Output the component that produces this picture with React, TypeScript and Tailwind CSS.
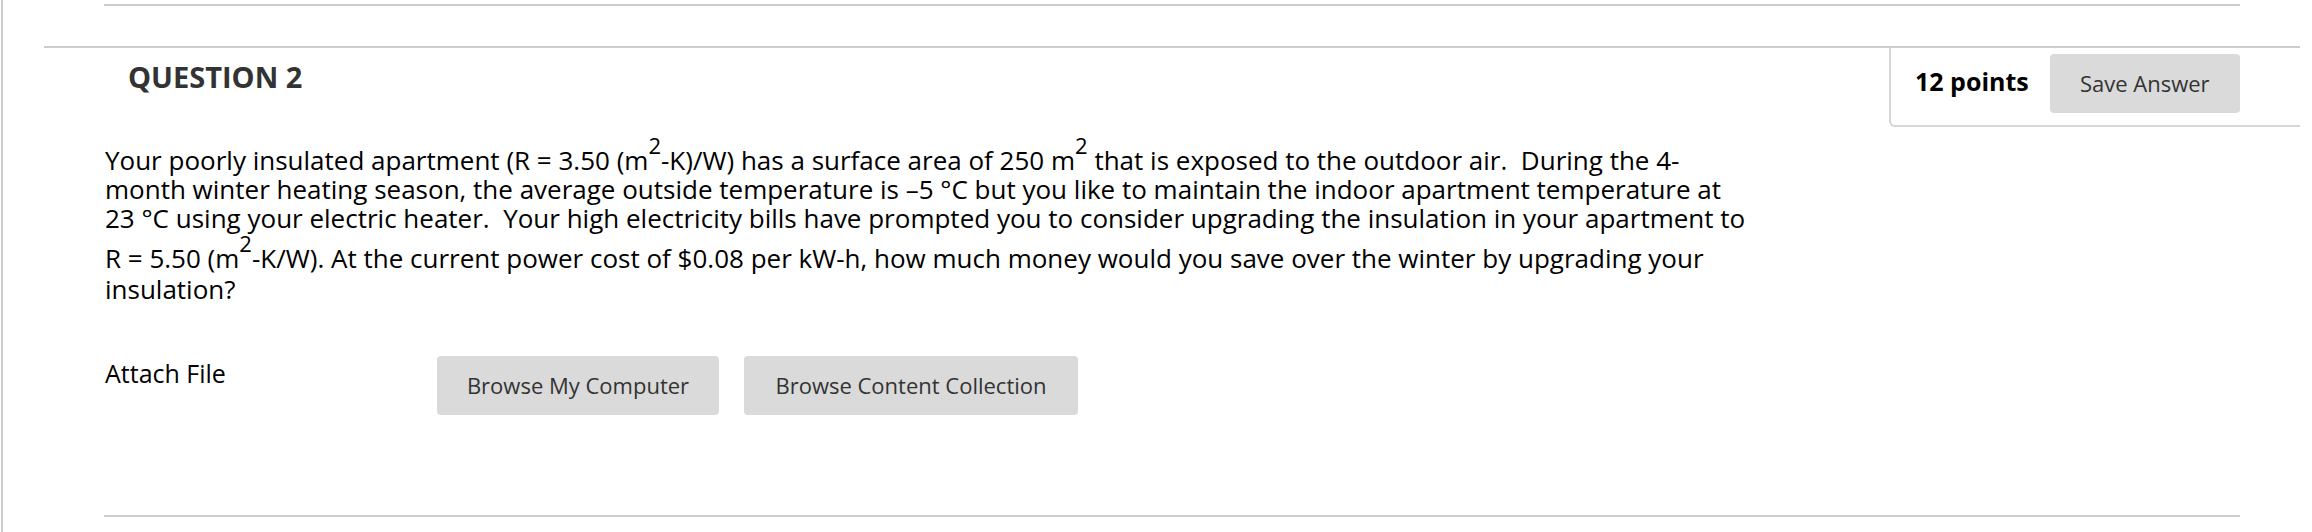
import React from 'react';

const Sup = ({ children }: { children: React.ReactNode }) => (
  <span className="inline-block text-[22px] leading-[21px] align-[16px]">{children}</span>
);

const GreyButton = ({ label, width }: { label: string; width: string }) => (
  <button
    className={`${width} h-[59px] shrink-0 rounded-[4px] bg-[#dadada] text-[22px] text-[#333333] flex items-center justify-center`}
  >
    {label}
  </button>
);

export default function App() {
  return (
    <div
      className="w-[2312px] h-[532px] bg-white overflow-hidden"
      style={{ fontFamily: '"Open Sans", "Liberation Sans", sans-serif' }}
    >
      <div className="ml-[1px] h-full border-l-2 border-[#cdcdcd] pt-[4px]">
        {/* previous question divider */}
        <div className="ml-[101px] w-[2136px] h-[2px] bg-[#cdcdcd]" />

        {/* Question card */}
        <div className="mt-[40px] ml-[41px] w-[2256px] border-t-2 border-[#cdcdcd]">
          <div className="flex justify-between items-start">
            <h3 className="ml-[84px] mt-[14px] text-[29px] leading-[29px] font-bold text-[#333333]">
              QUESTION 2
            </h3>
            <div className="w-[411px] h-[79px] border-l-2 border-b-2 border-[#d6d6d6] rounded-bl-[6px] pl-[24px] pt-[6px] flex items-start gap-[21px]">
              <span className="mt-[15px] text-[25px] leading-[25px] font-bold text-black">12 points</span>
              <GreyButton label="Save Answer" width="w-[190px]" />
            </div>
          </div>

          <div className="pl-[61px]">
            <p className="mt-[8px] text-[26px] leading-[29px] text-black">
              Your poorly insulated apartment (R = 3.50 (m<Sup>2</Sup>-K)/W) has a surface area of 250 m<Sup>2</Sup> that
              is exposed to the outdoor air.{'\u00a0'} During the 4-
              <br />
              month winter heating season, the average outside temperature is –5 °C but you like to maintain the
              indoor apartment temperature at
              <br />
              23 °C using your electric heater.{'\u00a0'} Your high electricity bills have prompted you to consider
              upgrading the insulation in your apartment to
              <br />
              R = 5.50 (m<Sup>2</Sup>-K/W). At the current power cost of $0.08 per kW-h, how much money would you save
              over the winter by upgrading your
              <br />
              <span className="inline-block pt-[2px]">insulation?</span>
            </p>

            <div className="mt-[52px] flex items-start">
              <span className="w-[332px] mt-[5px] text-[25px] leading-[25px] text-black">Attach File</span>
              <div className="flex gap-[25px]">
                <GreyButton label="Browse My Computer" width="w-[282px]" />
                <GreyButton label="Browse Content Collection" width="w-[334px]" />
              </div>
            </div>
          </div>
        </div>

        {/* bottom divider */}
        <div className="mt-[100px] ml-[101px] w-[2136px] h-[2px] bg-[#cdcdcd]" />
      </div>
    </div>
  );
}
